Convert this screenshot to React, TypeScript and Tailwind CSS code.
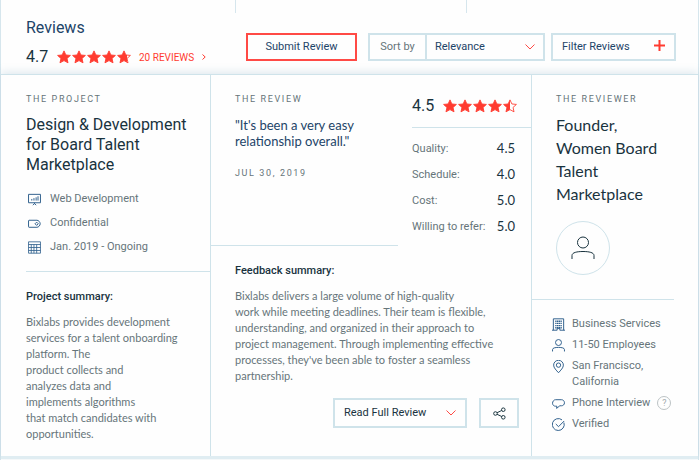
import { type ReactNode } from "react";

const scores = [
  { label: "Quality:", value: "4.5" },
  { label: "Schedule:", value: "4.0" },
  { label: "Cost:", value: "5.0" },
  { label: "Willing to refer:", value: "5.0" },
];

const STAR = "M12 1.500l3.200 7 7.800.8-5.800 5.200 1.700 7.500L12 18.200 5.100 22l1.700-7.500L1 9.300l7.800-.8z";

const Stars = ({ rating }: { rating: number }) => (
  <div className="flex gap-px text-[#ff3b30]" role="img" aria-label={`${rating} out of 5`}>
    {[0, 1, 2, 3, 4].map((i) => {
      const fill = Math.min(1, Math.max(0, rating - i));
      return (
        <span key={i} className="relative block h-[14px] w-[14px]">
          <svg viewBox="0 0 24 24" className="h-[14px] w-[14px]" fill="none" stroke="currentColor" strokeWidth="1.500">
            <path d={STAR} />
          </svg>
          <span className="absolute inset-y-0 left-0 overflow-hidden" style={{ width: `${fill * 100}%` }}>
            <svg viewBox="0 0 24 24" className="h-[14px] w-[14px] max-w-none" fill="currentColor">
              <path d={STAR} />
            </svg>
          </span>
        </span>
      );
    })}
  </div>
);

const Icon = ({ children, className = "h-[13px] w-[13px]" }: { children: ReactNode; className?: string }) => (
  <svg
    viewBox="0 0 24 24"
    className={`shrink-0 ${className}`}
    fill="none"
    stroke="currentColor"
    strokeWidth="1.8"
    strokeLinejoin="round"
    aria-hidden="true"
  >
    {children}
  </svg>
);

const BoardIcon = () => (
  <Icon>
    <path d="M1 2.5h22v15.500H1zM12 18v2M9 22.500l3-3 3 3M7 14v-3M11 14V9.500M15 14V8M18.500 14V6" />
  </Icon>
);

const TagIcon = () => (
  <Icon>
    <path d="M2 6h14.500c3 0 6 3.500 6 6.500s-3 6.500-6 6.500H2c-.6 0-1-.4-1-1V7c0-.6.4-1 1-1z" />
    <path d="M16 9.500l3 3-3 3-3-3z" />
  </Icon>
);

const CalendarIcon = () => (
  <Icon>
    <path d="M1 1.500h22v21H1zM1 6.500h22M6 6.500v16M11 6.500v16M16 6.500v16M1 12h22M1 17.500h22" strokeWidth="1.500" />
  </Icon>
);

const BuildingIcon = () => (
  <Icon>
    <path d="M2.500 22.500v-21h19v21M0 22.500h9.500V19h5v3.500H24" />
    <path d="M6 6h12M6 10h12M6 14h12M6 18h12" strokeWidth="2.400" strokeDasharray="2.400 0.800" />
  </Icon>
);

const PersonIcon = ({ className }: { className?: string }) => (
  <Icon className={className}>
    <circle cx="12" cy="6.500" r="5.500" />
    <path d="M1 23v-3.500c0-3 5-4 11-4s11 1 11 4V23" />
  </Icon>
);

const PinIcon = () => (
  <Icon>
    <path d="M12 23.500C8 19 3 14.500 3 9.500a9 9 0 0 1 18 0c0 5-5 9.500-9 14z" />
    <circle cx="12" cy="9.500" r="4" />
  </Icon>
);

const SpeechIcon = () => (
  <Icon>
    <path d="M9 17H6.500C3.500 17 1 14.800 1 11.500S3.500 5 6.500 5h11c3 0 5.500 2.500 5.500 5.700 0 3.300-2.500 5.500-5.500 5.500h-3L8.500 21z" />
  </Icon>
);

const CheckIcon = () => (
  <Icon>
    <path d="M22 8.500A11 11 0 1 1 18.500 3.500" />
    <path d="M7 11l5 5L22.500 5.500" />
  </Icon>
);

const ShareIcon = () => (
  <Icon>
    <circle cx="4.500" cy="12" r="3.300" />
    <circle cx="19" cy="5" r="3.300" />
    <circle cx="19" cy="19" r="3.300" />
    <path d="M7.500 10.500l8.500-4M7.500 13.500l8.500 4" />
  </Icon>
);

const Chevron = ({ className = "" }: { className?: string }) => (
  <svg viewBox="0 0 10 6" className={`h-[6px] w-[10px] text-[#ff4a45] ${className}`} fill="none" stroke="currentColor" aria-hidden="true">
    <path d="M.5.5L5 5 9.500.5" />
  </svg>
);

const Eyebrow = ({ children }: { children: ReactNode }) => (
  <p className="text-[9px] leading-4 tracking-[0.18em] text-[#66757a] uppercase">{children}</p>
);

const Detail = ({ icon, children }: { icon: ReactNode; children: ReactNode }) => (
  <li className="flex items-start">
    <span className="flex h-4 shrink-0 items-center text-[#2e5f8c]">{icon}</span>
    <span className="flex items-center">{children}</span>
  </li>
);

const ReviewsHeader = () => (
  <header className="flex items-start justify-between pr-[22px] pb-[5px] pl-[25px]">
    <div className="pt-[3px]">
      <h2 className="text-[16px] leading-6 text-[#1d4468]">Reviews</h2>
      <div className="mt-[5px] flex items-center">
        <span className="w-[31px] text-[16px] leading-6">4.7</span>
        <Stars rating={4.7} />
        <a href="#reviews" className="ml-2 flex items-center gap-2 text-[10px] text-[#ff3b30]">
          20 REVIEWS
          <svg viewBox="0 0 4 6" className="h-[6px] w-[4px]" fill="none" stroke="currentColor" aria-hidden="true">
            <path d="M.5.500L3.200 3 .5 5.500" />
          </svg>
        </a>
      </div>
    </div>
    <div className="flex pt-5 text-[11px] text-[#1d4468]">
      <button type="button" className="h-7 w-[111px] border-2 border-[#ff4a45]">
        Submit Review
      </button>
      <div className="ml-[11px] flex h-7 border-2 border-[#cfe3ea]">
        <label htmlFor="sort" className="flex w-[57px] items-center justify-center border-r-2 border-[#cfe3ea] text-[#66757a]">
          Sort by
        </label>
        <div className="relative">
          <select id="sort" className="h-full w-[116px] appearance-none bg-transparent pl-2">
            <option>Relevance</option>
          </select>
          <Chevron className="pointer-events-none absolute top-[9px] right-2" />
        </div>
      </div>
      <button type="button" className="ml-[6px] flex h-7 w-[125px] items-center justify-between border-2 border-[#cfe3ea] px-[9px]">
        Filter Reviews
        <svg viewBox="0 0 11 11" className="mb-1 h-[11px] w-[11px] text-[#ff3b30]" stroke="currentColor" strokeWidth="2" aria-hidden="true">
          <path d="M5.500 0v11M0 5.500h11" />
        </svg>
      </button>
    </div>
  </header>
);

const ProjectColumn = () => (
  <section className="border-r border-[#cfe3ea] pt-4 pb-[14px] pl-[25px]">
    <Eyebrow>The Project</Eyebrow>
    <h3 className="mt-2 text-[16px] leading-5">Design &amp; Development for Board Talent Marketplace</h3>
    <ul className="mt-4 flex flex-col gap-2 pb-4 pl-[2px] text-[11px] leading-4 text-[#66757a] [&>li]:gap-[9px]">
      <Detail icon={<BoardIcon />}>Web Development</Detail>
      <Detail icon={<TagIcon />}>Confidential</Detail>
      <Detail icon={<CalendarIcon />}>Jan. 2019 - Ongoing</Detail>
    </ul>
    <div className="border-t border-[#cfe3ea] pt-[17px] pr-4">
      <h4 className="text-[11px] leading-4 font-medium">Project summary:</h4>
      <p className="mt-[9px] font-['Lato',sans-serif] text-[11px] leading-4 text-[#66757a]">
        Bixlabs provides development
        <br />
        services for a talent onboarding
        <br />
        platform. The
        <br />
        product collects and
        <br />
        analyzes data and
        <br />
        implements algorithms
        <br />
        that match candidates with
        <br />
        opportunities.
      </p>
    </div>
  </section>
);

const ReviewColumn = () => (
  <section className="border-r border-[#cfe3ea]">
    <div className="flex justify-between">
      <div className="grow border-b border-[#cfe3ea] pt-4 pl-6">
        <Eyebrow>The Review</Eyebrow>
        <blockquote className="mt-[10px] font-['Lato',sans-serif] text-[13px] leading-4 text-[#1d4468]">
          "It's been a very easy
          <br />
          relationship overall."
        </blockquote>
        <div className="mt-4">
          <Eyebrow>Jul 30, 2019</Eyebrow>
        </div>
      </div>
      <div className="ml-[14px] w-[119px] pt-[19px]">
        <div className="flex items-center border-b border-[#cfe3ea] pb-[9px]">
          <span className="w-[31px] text-[16px] leading-6">4.5</span>
          <Stars rating={4.5} />
        </div>
        <dl className="pt-2 pr-4 pb-[6px]">
          {scores.map((score) => (
            <div key={score.label} className="flex h-[26px] items-center justify-between whitespace-nowrap">
              <dt className="text-[11px] text-[#66757a]">{score.label}</dt>
              <dd className="font-['Lato',sans-serif] text-[13px]">{score.value}</dd>
            </div>
          ))}
        </dl>
      </div>
    </div>
    <div className="pt-[17px] pr-3 pl-6">
      <h4 className="text-[11px] leading-4 font-medium">Feedback summary:</h4>
      <p className="mt-[9px] font-['Lato',sans-serif] text-[11px] leading-4 text-[#66757a]">
        Bixlabs delivers a large volume of high-quality
        <br />
        work while meeting deadlines. Their team is flexible,
        <br />
        understanding, and organized in their approach to
        <br />
        project management. Through implementing effective
        <br />
        processes, they've been able to foster a seamless
        <br />
        partnership.
      </p>
      <div className="mt-[14px] flex justify-end gap-3 text-[11px]">
        <button type="button" className="flex h-[30px] w-[134px] items-center justify-between border-2 border-[#cfe3ea] px-[9px]">
          Read Full Review
          <Chevron />
        </button>
        <button type="button" aria-label="Share" className="flex h-[30px] w-10 items-center justify-center border-2 border-[#cfe3ea]">
          <ShareIcon />
        </button>
      </div>
    </div>
  </section>
);

const ReviewerColumn = () => (
  <section className="pt-4">
    <div className="pr-4 pl-6">
      <Eyebrow>The Reviewer</Eyebrow>
      <h3 className="mt-[6px] font-['Lato',sans-serif] text-[16px] leading-[23px]">
        Founder,
        <br />
        Women Board
        <br />
        Talent
        <br />
        Marketplace
      </h3>
      <div className="mt-4 flex h-[54px] w-[54px] items-center justify-center rounded-full border border-[#cfe3ea]">
        <PersonIcon className="h-6 w-6 stroke-1" />
      </div>
    </div>
    <ul className="mt-6 mr-6 flex flex-col gap-[5px] border-t border-[#cfe3ea] pt-4 pl-5 text-[11px] leading-4 text-[#66757a] [&>li]:gap-[7px]">
      <Detail icon={<BuildingIcon />}>Business Services</Detail>
      <Detail icon={<PersonIcon />}>11-50 Employees</Detail>
      <Detail icon={<PinIcon />}>
        San Francisco,
        <br />
        California
      </Detail>
      <Detail icon={<SpeechIcon />}>
        Phone Interview
        <button
          type="button"
          aria-label="About phone interviews"
          className="-my-px ml-[7px] flex h-[14px] w-[14px] items-center justify-center rounded-full border border-[#bcc3c5] text-[9px] text-[#a3abad]"
        >
          ?
        </button>
      </Detail>
      <Detail icon={<CheckIcon />}>Verified</Detail>
    </ul>
  </section>
);

const App = () => (
  <main className="mr-px min-h-screen border-x border-[#d6e6ed] bg-[#fefefe] font-['Roboto',sans-serif] text-[#19333e]">
    <div className="grid h-[13px] grid-cols-[235fr_231fr_231fr] divide-x divide-[#d6e6ed]">
      <div />
      <div />
      <div />
    </div>
    <ReviewsHeader />
    <div className="grid grid-cols-[210fr_321fr_166fr] border-t border-b-3 border-t-[#cfe3ea] border-b-[#e0edf2] shadow-[0_-2px_8px_rgba(130,170,195,0.25)]">
      <ProjectColumn />
      <ReviewColumn />
      <ReviewerColumn />
    </div>
  </main>
);

export default App;
